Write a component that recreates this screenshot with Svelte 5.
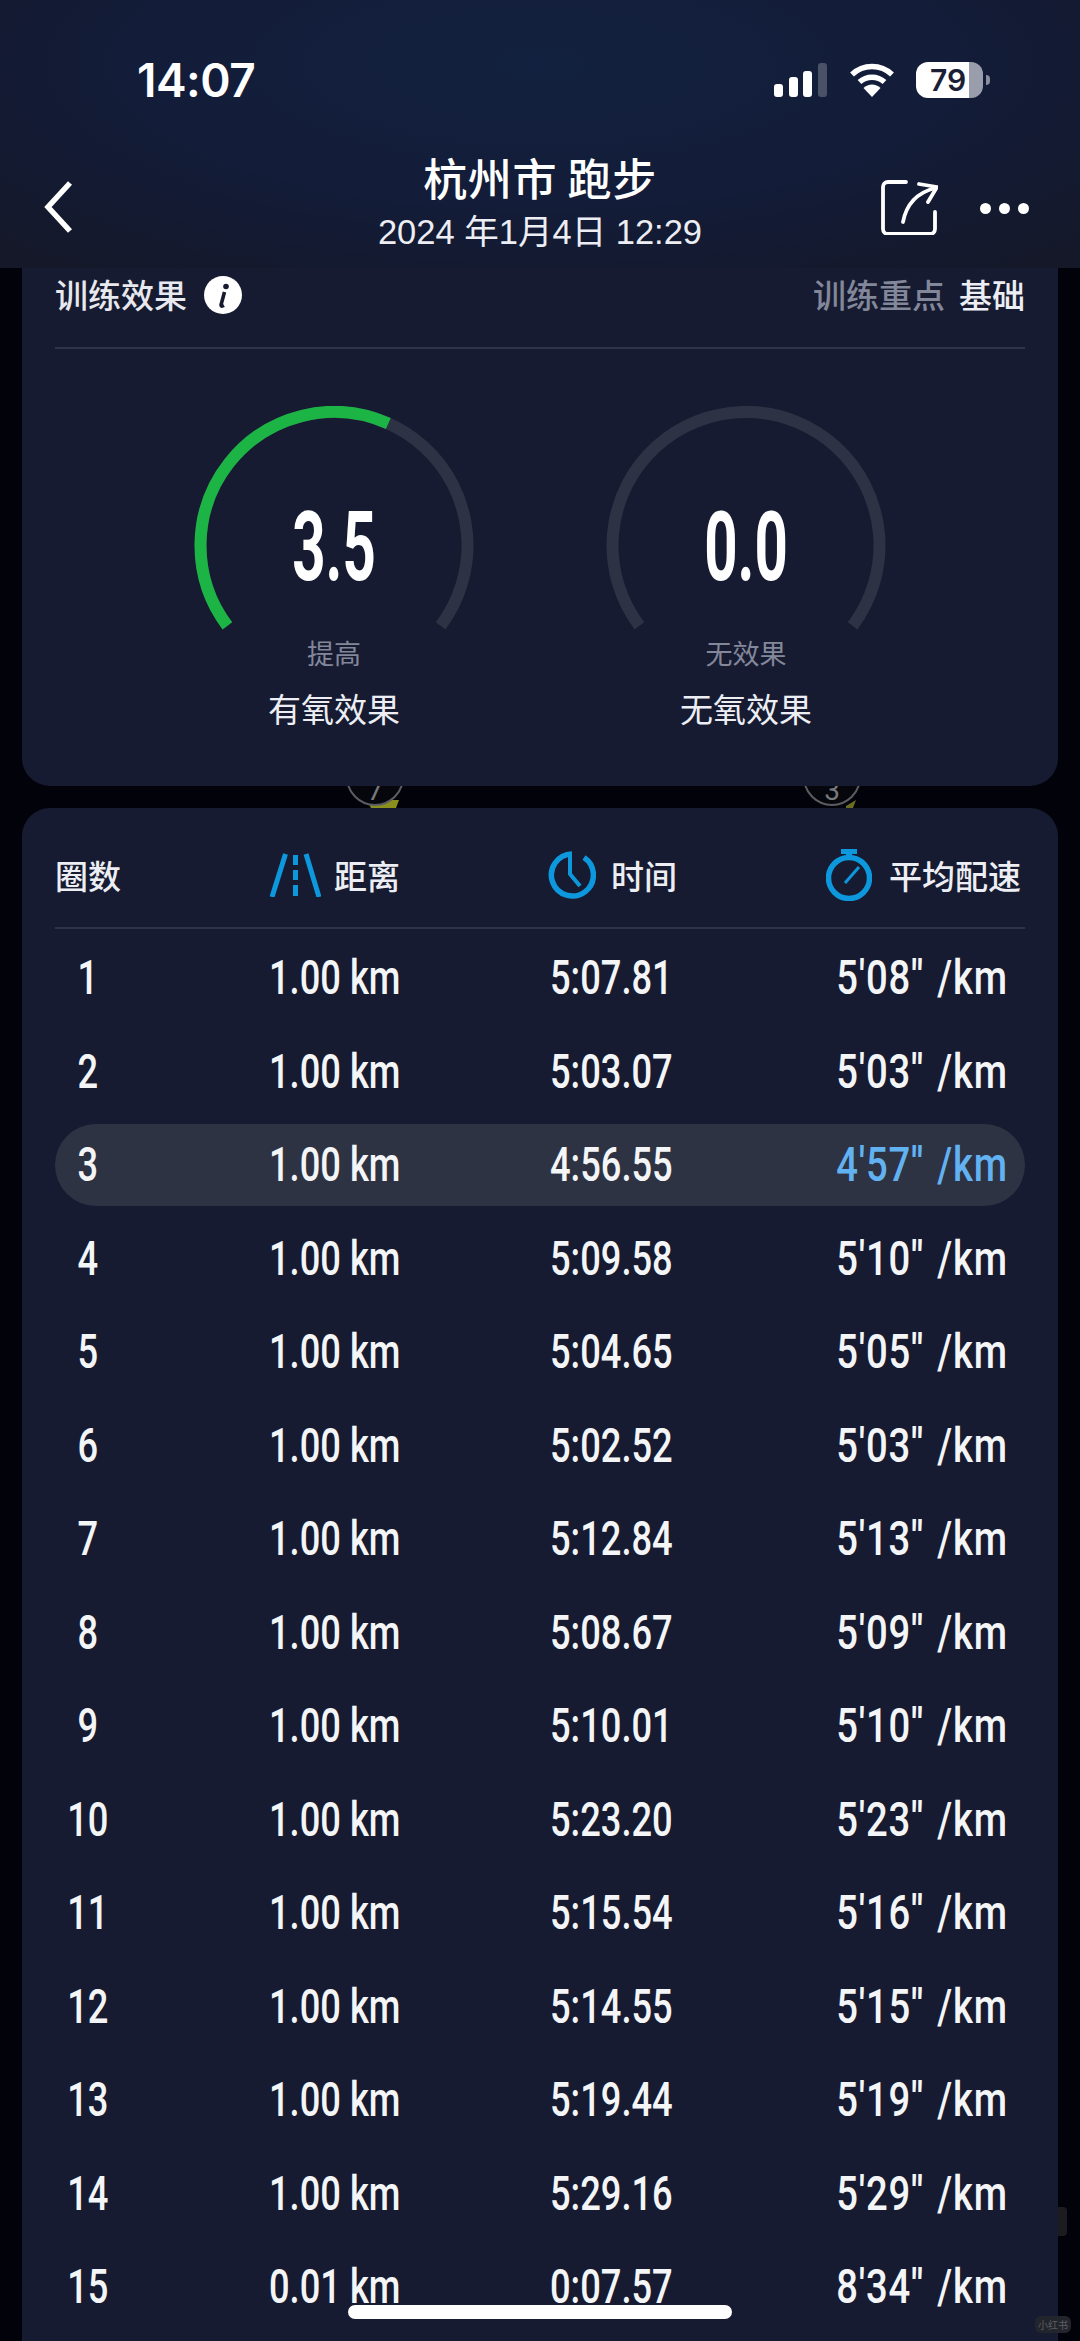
<script>
  const laps = [
    ['1', '1.00 km', '5:07.81', `5'08'' /km`],
    ['2', '1.00 km', '5:03.07', `5'03'' /km`],
    ['3', '1.00 km', '4:56.55', `4'57'' /km`],
    ['4', '1.00 km', '5:09.58', `5'10'' /km`],
    ['5', '1.00 km', '5:04.65', `5'05'' /km`],
    ['6', '1.00 km', '5:02.52', `5'03'' /km`],
    ['7', '1.00 km', '5:12.84', `5'13'' /km`],
    ['8', '1.00 km', '5:08.67', `5'09'' /km`],
    ['9', '1.00 km', '5:10.01', `5'10'' /km`],
    ['10', '1.00 km', '5:23.20', `5'23'' /km`],
    ['11', '1.00 km', '5:15.54', `5'16'' /km`],
    ['12', '1.00 km', '5:14.55', `5'15'' /km`],
    ['13', '1.00 km', '5:19.44', `5'19'' /km`],
    ['14', '1.00 km', '5:29.16', `5'29'' /km`],
    ['15', '0.01 km', '0:07.57', `8'34'' /km`],
  ];
  const fastest = '3';

  const gauges = [
    { value: '3.5', level: '提高', name: '有氧效果', green: true },
    { value: '0.0', level: '无效果', name: '无氧效果', green: false },
  ];
</script>

<div class="page">
  <header class="top">
    <div class="status">
      <span class="clock">14:07</span>
      <div class="status-icons">
        <svg class="signal" width="54" height="34" viewBox="0 0 54 34">
          <rect x="0" y="21" width="9" height="13" rx="3" fill="#fff" />
          <rect x="15" y="14" width="9" height="20" rx="3" fill="#fff" />
          <rect x="29" y="8" width="9" height="26" rx="3" fill="#fff" />
          <rect x="44" y="0" width="9" height="34" rx="3" fill="#4a5268" />
        </svg>
        <svg class="wifi" width="46" height="34" viewBox="0 0 46 34">
          <path d="M3 11.5 A29 29 0 0 1 43 11.5" fill="none" stroke="#fff" stroke-width="5.5" />
          <path d="M10.5 19 A18.5 18.5 0 0 1 35.5 19" fill="none" stroke="#fff" stroke-width="5.5" />
          <path d="M23 34 L14.5 25 A12 12 0 0 1 31.5 25 Z" fill="#fff" />
        </svg>
        <div class="battery">
          <div class="batt-body"><span>79</span></div>
          <div class="batt-nub"></div>
        </div>
      </div>
    </div>
    <div class="nav">
      <svg class="back" width="30" height="54" viewBox="0 0 30 54">
        <path d="M27 3 L5 27 L27 51" fill="none" stroke="#fff" stroke-width="5.5" />
      </svg>
      <div class="title">
        <div class="city">杭州市 跑步</div>
        <div class="date">2024 年1月4日 12:29</div>
      </div>
      <div class="nav-right">
        <svg width="58" height="58" viewBox="0 0 58 58">
          <path d="M26 5 H8 A5 5 0 0 0 3 10 V52 A5 5 0 0 0 8 57 H50 A5 5 0 0 0 55 52 V35" fill="none" stroke="#fff" stroke-width="3.8" stroke-linecap="round" />
          <path d="M23 45 C26 29 36 16 55 11" fill="none" stroke="#fff" stroke-width="3.8" stroke-linecap="round" />
          <path d="M39 7 L57 10 L48 25" fill="none" stroke="#fff" stroke-width="3.8" stroke-linecap="round" stroke-linejoin="round" />
        </svg>
        <div class="dots"><i></i><i></i><i></i></div>
      </div>
    </div>
  </header>

  <section class="card effect">
    <div class="effect-head">
      <div class="head-left">
        <span>训练效果</span>
        <svg width="38" height="38" viewBox="0 0 38 38">
          <circle cx="19" cy="19" r="19" fill="#fff" />
          <path d="M20.5 16 L17 29 Q17 31 20 29.5" fill="none" stroke="#161b31" stroke-width="3.6" />
          <circle cx="22" cy="10.5" r="2.8" fill="#161b31" />
        </svg>
      </div>
      <div class="head-right"><span class="muted">训练重点</span><span class="focus">基础</span></div>
    </div>
    <div class="gauges">
      {#each gauges as g}
        <div class="gauge">
          <div class="dial">
            <svg width="280" height="226" viewBox="0 0 280 226">
              <path d="M33.4 219.8 A133.5 133.5 0 1 1 246.6 219.8" fill="none" stroke="#2e3245" stroke-width="12" />
              {#if g.green}
                <path d="M33.4 219.8 A133.5 133.5 0 0 1 194.3 17.5" fill="none" stroke="#1db446" stroke-width="12" />
              {/if}
            </svg>
            <span class="value">{g.value}</span>
          </div>
          <div class="level">{g.level}</div>
          <div class="gauge-name">{g.name}</div>
        </div>
      {/each}
    </div>
  </section>

  <div class="gap">
    <svg width="1080" height="22" viewBox="0 0 1080 22">
      <path d="M367 14 L399 14 L396 22 L371 22 Z" fill="#8a8f1e" />
      <circle cx="375" cy="-9" r="28" fill="#06070d" stroke="#5b5d60" stroke-width="2" />
      <text x="375" y="14" class="gap-num">7</text>
      <path d="M846 20 L856 14 L853 22 L846 22 Z" fill="#6b6e22" />
      <circle cx="832" cy="-9" r="28" fill="#06070d" stroke="#5b5d60" stroke-width="2" />
      <text x="832" y="14" class="gap-num">3</text>
    </svg>
  </div>

  <section class="card laps">
    <div class="laps-head">
      <div class="hcell">圈数</div>
      <div></div>
      <div class="hcell">
        <svg width="52" height="44" viewBox="0 0 52 44">
          <path d="M16.5 1 L3 44 M37 1 L50 44" stroke="#0d97dd" stroke-width="5" fill="none" />
          <path d="M26.5 2 V12 M26.5 17 V27 M26.5 32 V43" stroke="#0d97dd" stroke-width="5" fill="none" />
        </svg>
        <span class="hlabel">距离</span>
      </div>
      <div class="hcell time-cell">
        <svg width="48" height="48" viewBox="0 0 48 48">
          <path d="M24 3 A21 21 0 1 0 36 6.5" fill="none" stroke="#0d97dd" stroke-width="5.5" />
          <path d="M22 5 V23 L32 35" fill="none" stroke="#0d97dd" stroke-width="4" />
        </svg>
        <span class="hlabel">时间</span>
      </div>
      <div class="hcell pace-cell">
        <svg width="46" height="52" viewBox="0 0 46 52">
          <rect x="15" y="0" width="16" height="5" fill="#0d97dd" />
          <rect x="20" y="4" width="6" height="6" fill="#0d97dd" />
          <circle cx="23" cy="29" r="20.5" fill="none" stroke="#0d97dd" stroke-width="5.5" />
          <path d="M19 34 L33 18" stroke="#0d97dd" stroke-width="3" />
        </svg>
        <span class="hlabel">平均配速</span>
      </div>
    </div>

    <div class="list">
      {#each laps as lap}
        <div class="row" class:hl={lap[0] === fastest}>
          <div class="num"><span>{lap[0]}</span></div>
          <div></div>
          <div class="cell"><span>{lap[1]}</span></div>
          <div class="cell"><span>{lap[2]}</span></div>
          <div class="pace"><span>{lap[3]}</span></div>
        </div>
      {/each}
    </div>
  </section>

  <div class="scroll-tab"></div>
  <div class="mark">小红书</div>
  <div class="home"></div>
</div>

<style>
  :global(body) {
    margin: 0;
    background: #000;
  }

  .page {
    position: relative;
    width: 1080px;
    height: 2341px;
    overflow: hidden;
    background: #02030a;
    color: #fff;
    font-family: "Noto Sans CJK SC", "Noto Sans", sans-serif;
  }

  /* top bar */
  .top {
    height: 268px;
    background: radial-gradient(ellipse 760px 260px at 50% 24%, #12213f 0%, #131c38 55%, #141829 100%);
  }

  .status {
    display: flex;
    justify-content: space-between;
    padding: 53px 90px 0 137px;
    height: 140px;
    box-sizing: border-box;
  }

  .clock {
    font-family: Inter, "Liberation Sans", sans-serif;
    font-weight: 600;
    font-size: 46px;
    line-height: 54px;
    letter-spacing: -0.5px;
  }

  .status-icons {
    display: flex;
    align-items: flex-start;
    padding-top: 10px;
  }

  .signal { margin-right: 21px; }
  .wifi { margin-right: 21px; }

  .battery {
    display: flex;
    align-items: center;
    margin-top: -1px;
  }

  .batt-body {
    width: 67px;
    height: 36px;
    border-radius: 12px;
    background: linear-gradient(90deg, #fff 0 53px, #9a9dab 53px);
    display: flex;
    align-items: center;
    padding-left: 14px;
    box-sizing: border-box;
  }

  .batt-body span {
    font-family: Inter, "Liberation Sans", sans-serif;
    font-weight: 600;
    font-size: 30px;
    color: #1a2036;
    line-height: 36px;
  }

  .batt-nub {
    width: 4px;
    height: 10px;
    margin-left: 3px;
    background: #8a8d9b;
    border-radius: 0 4px 4px 0;
  }

  .nav {
    display: grid;
    grid-template-columns: 1fr auto 1fr;
    padding: 0 43px;
    height: 128px;
  }

  .back { margin-top: 40px; }

  .title { text-align: center; }

  .city {
    font-size: 44px;
    font-weight: 500;
    line-height: 60px;
    margin-top: 7px;
    letter-spacing: 0.6px;
  }

  .date {
    font-family: "Liberation Sans", "Noto Sans CJK SC", sans-serif;
    font-size: 34.5px;
    line-height: 40px;
    margin-top: 5px;
    color: #eceef3;
    white-space: nowrap;
  }

  .nav-right {
    display: flex;
    justify-content: flex-end;
    align-items: flex-start;
    gap: 42px;
    padding: 37px 8px 0 0;
  }

  .dots {
    display: flex;
    gap: 8px;
    margin-top: 26px;
  }

  .dots i {
    width: 11px;
    height: 11px;
    border-radius: 50%;
    background: #fff;
  }

  /* cards */
  .card {
    margin: 0 22px;
    background: #161b31;
  }

  .effect {
    height: 518px;
    border-radius: 0 0 28px 28px;
    padding: 0 33px;
    box-sizing: border-box;
  }

  .effect-head {
    display: flex;
    justify-content: space-between;
    align-items: center;
    height: 53px;
    padding-bottom: 26px;
    border-bottom: 2px solid #2e3347;
    font-size: 33px;
    line-height: 53px;
    font-weight: 500;
  }

  .head-left {
    display: flex;
    align-items: center;
    gap: 17px;
    color: #e8e9ee;
  }

  .head-right { white-space: nowrap; }
  .muted { color: #83879a; }
  .focus { color: #eceef3; margin-left: 14px; }

  .gauges {
    display: flex;
    justify-content: center;
    gap: 132px;
    padding-top: 57px;
  }

  .gauge {
    width: 280px;
    text-align: center;
  }

  .dial {
    position: relative;
    height: 226px;
  }

  .dial svg { display: block; }

  .value {
    position: absolute;
    left: 0;
    right: 0;
    top: 71px;
    font-family: Roboto, "Liberation Sans", sans-serif;
    font-weight: 700;
    font-size: 97px;
    line-height: 140px;
    transform: scaleX(0.6);
  }

  .level {
    font-size: 27px;
    line-height: 36px;
    margin-top: 3px;
    color: #83879a;
  }

  .gauge-name {
    font-size: 33px;
    line-height: 48px;
    margin-top: 13px;
    color: #eceef3;
  }

  .gap {
    height: 22px;
    overflow: hidden;
  }

  .gap svg { display: block; }

  .gap-num {
    font-family: Roboto, sans-serif;
    font-size: 28px;
    fill: #77797c;
    text-anchor: middle;
  }

  .laps {
    border-radius: 28px 28px 0 0;
    padding: 0 33px;
    height: 1533px;
    box-sizing: border-box;
  }

  .laps-head {
    display: grid;
    grid-template-columns: 66px 148px 281px 1fr auto;
    align-items: center;
    height: 105px;
    padding-top: 14px;
    border-bottom: 2px solid #2e3347;
    font-size: 33px;
    font-weight: 500;
    color: #eceef3;
  }

  .hcell {
    display: flex;
    align-items: center;
    white-space: nowrap;
  }

  .hcell svg { flex-shrink: 0; }
  .hlabel { margin-left: 13px; }
  .time-cell .hlabel { margin-left: 15px; }
  .time-cell { margin-left: -2px; }
  .pace-cell { padding-right: 4px; grid-column: 5; }
  .pace-cell .hlabel { margin-left: 17px; }

  .list {
    display: flex;
    flex-direction: column;
    gap: 11.5px;
    padding-top: 8px;
  }

  .row {
    display: grid;
    grid-template-columns: 66px 148px 281px 1fr auto;
    align-items: center;
    height: 82px;
    border-radius: 41px;
    font-family: Roboto, "Liberation Sans", sans-serif;
    font-weight: 500;
    font-size: 49px;
    line-height: 82px;
    color: #f4f5f7;
  }

  .row span {
    display: inline-block;
    white-space: nowrap;
  }

  .num {
    text-align: center;
  }

  .num span {
    transform: scaleX(0.74);
    transform-origin: center;
  }

  .cell span {
    transform: scaleX(0.74);
    transform-origin: left;
  }

  .pace {
    grid-column: 5;
    padding-right: 17px;
  }

  .pace span {
    transform: scaleX(0.78);
    transform-origin: right;
    letter-spacing: 1px;
    word-spacing: 4px;
  }

  .hl { background: #2e3344; }
  .hl .pace { color: #62b2f2; }

  .scroll-tab {
    position: absolute;
    left: 1058px;
    top: 2207px;
    width: 9px;
    height: 29px;
    border-radius: 0 4px 4px 0;
    background: #1c1c1e;
  }

  .mark {
    position: absolute;
    left: 1035px;
    top: 2316px;
    width: 36px;
    height: 17px;
    border-radius: 6px;
    background: #23252c;
    color: #5c5e66;
    font-size: 10px;
    line-height: 17px;
    text-align: center;
  }

  .home {
    position: absolute;
    left: 348px;
    top: 2305px;
    width: 384px;
    height: 14px;
    border-radius: 7px;
    background: #fff;
  }
</style>
